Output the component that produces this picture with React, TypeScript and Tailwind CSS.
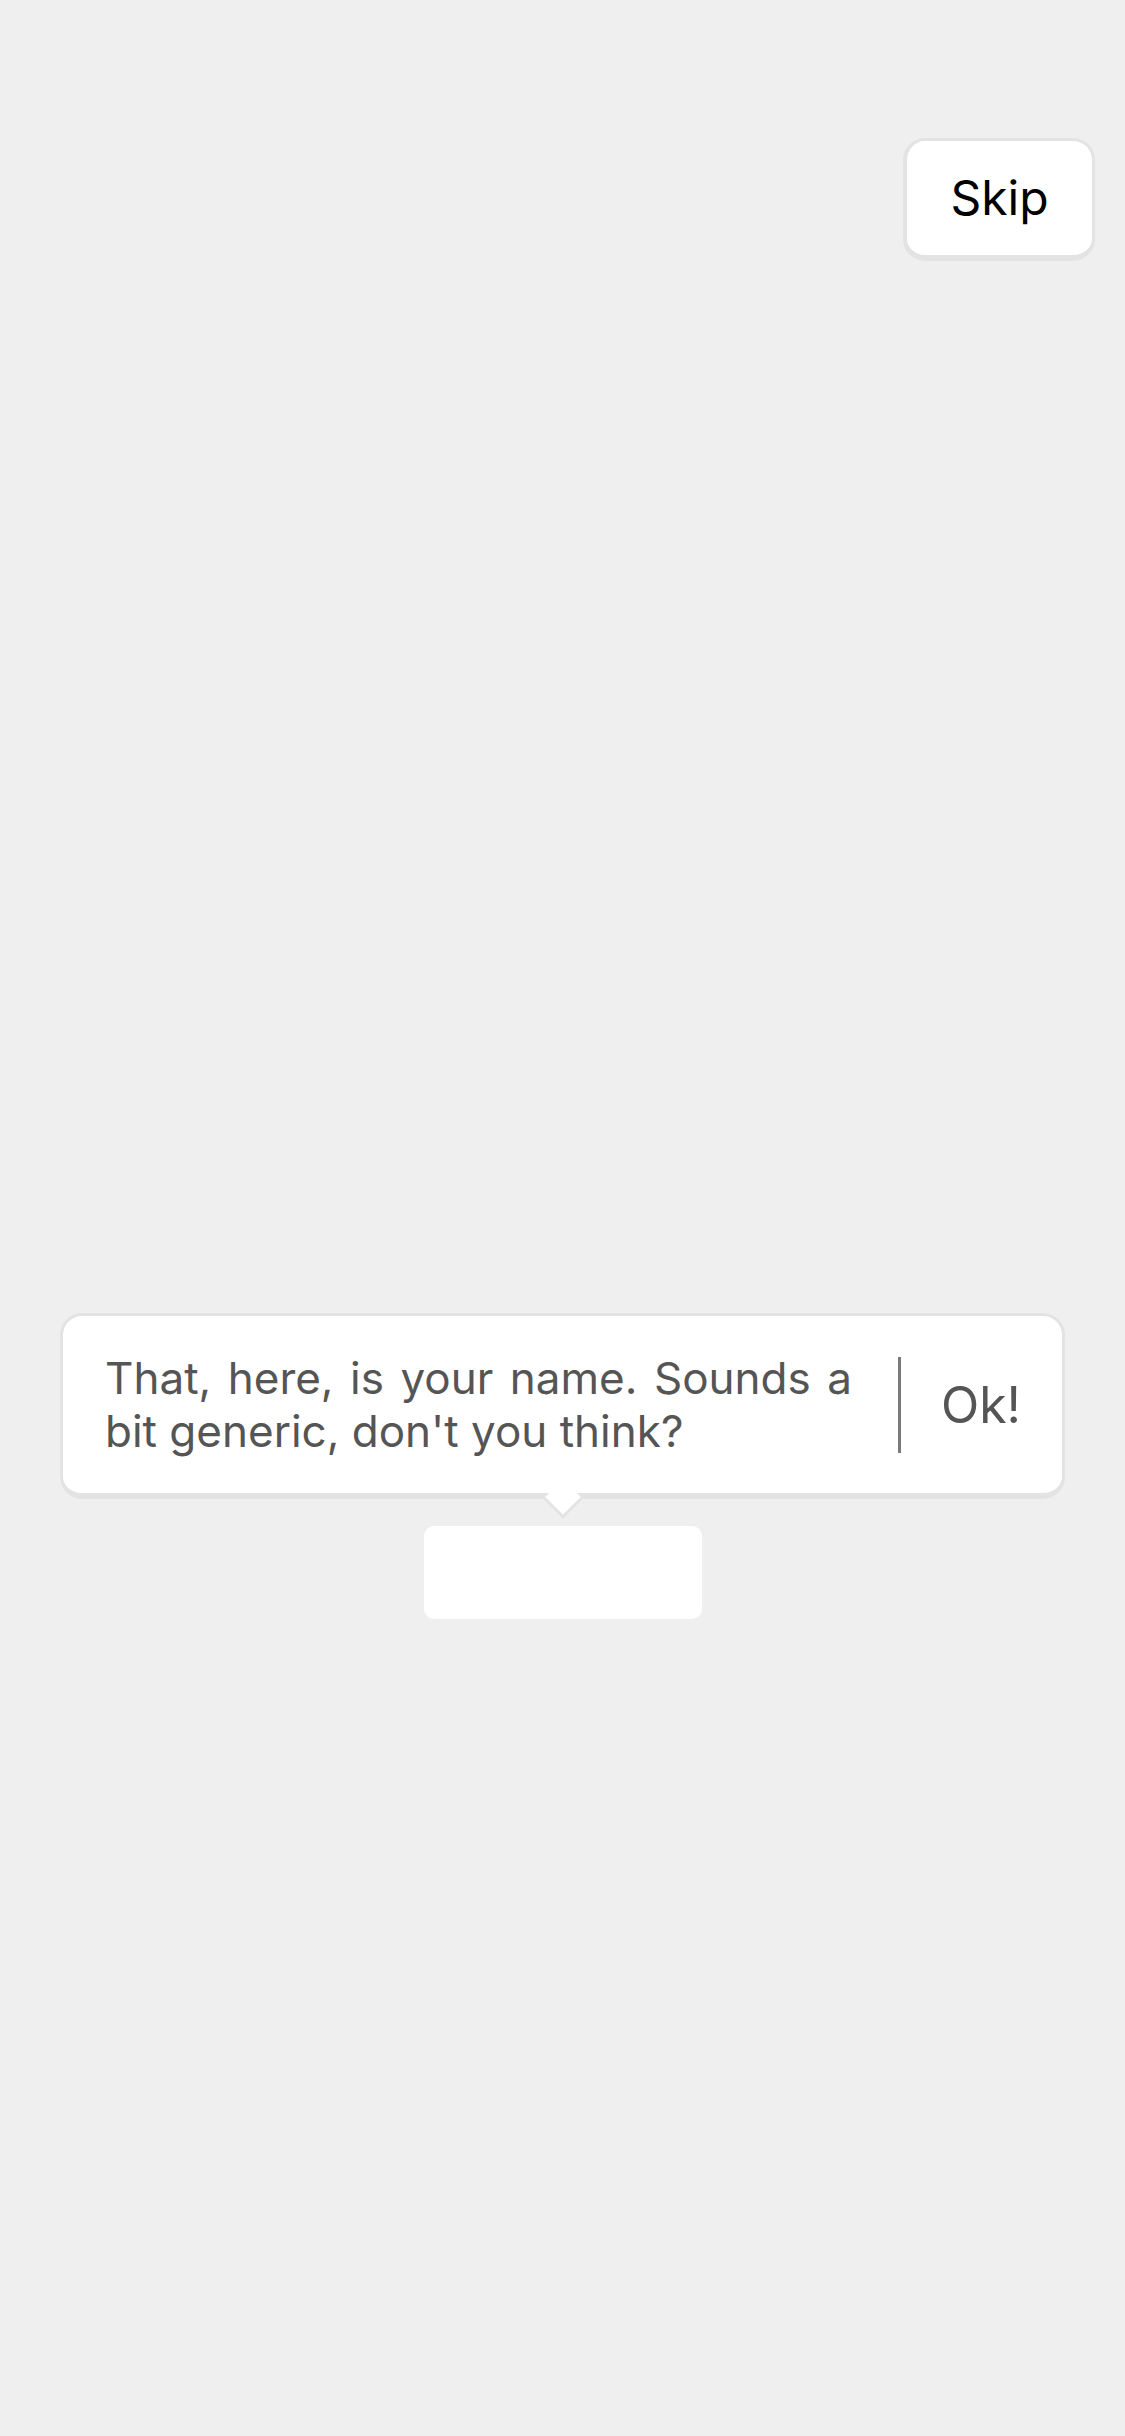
import React from "react";

export default function App() {
  return (
    <div
      className="min-h-[2436px] w-full bg-[#efefef] flex flex-col"
      style={{ fontFamily: "Inter, 'Noto Sans', sans-serif" }}
    >
      <div className="flex justify-end pt-[138px] pr-[30px]">
        <button className="w-[192px] h-[123px] bg-white rounded-[22px] border-[3px] border-b-[6px] border-l-[4px] border-[#e3e3e3] flex items-center justify-center text-[48px] leading-none text-black">
          Skip
        </button>
      </div>

      <div className="mt-[1052px] mx-[60px] relative bg-white rounded-[22px] border-[3px] border-b-[6px] border-[#e3e3e3]">
        <div className="flex items-center h-[177px] pl-[42px] pr-[41px]">
          <p className="flex-1 text-[44px] leading-[53px] text-[#555555] text-justify">
            That, here, is your name. Sounds a bit generic, don't you think?
          </p>
          <div className="w-[3px] h-[96px] bg-[#7a7a7a] ml-[46px] mr-[40px]" />
          <button className="text-[50px] leading-none text-[#555555]">Ok!</button>
        </div>
        <div className="absolute left-1/2 top-[calc(100%-8px)] -translate-x-1/2 rotate-45 w-[28px] h-[28px] bg-white border-r-[3px] border-b-[3px] border-[#e3e3e3]" />
      </div>

      <div className="mt-[27px] mx-auto w-[278px] h-[93px] bg-white rounded-[10px]" />
    </div>
  );
}
